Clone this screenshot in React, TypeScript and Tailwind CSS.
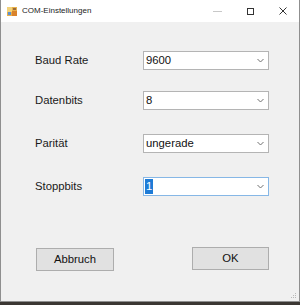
import React from "react";

const font = { fontFamily: '"Liberation Sans", Arial, sans-serif' };

function Chevron() {
  return (
    <svg width="7" height="5" viewBox="0 0 7 5" className="mr-[4px]">
      <polyline points="0.5,1 3.5,4 6.5,1" fill="none" stroke="#707070" strokeWidth="1" />
    </svg>
  );
}

function Combo({ value, focused }: { value: string; focused?: boolean }) {
  return (
    <div
      className={`ml-[108px] w-[126px] h-[19px] bg-white flex items-center justify-between border ${
        focused ? "border-[#86b7e6]" : "border-[#b4b4b4]"
      }`}
    >
      {focused ? (
        <span className="ml-[1px] h-[15px] px-[1px] bg-[#1e7bd6] text-white text-[11.3px] leading-[15px]">{value}</span>
      ) : (
        <span className="ml-[2px] text-[11.3px] leading-[15px] text-[#111]">{value}</span>
      )}
      <Chevron />
    </div>
  );
}

function Row({ label, value, focused, mt }: { label: string; value: string; focused?: boolean; mt: string }) {
  return (
    <div className={`flex items-center ${mt}`}>
      <span className="w-0 whitespace-nowrap ml-[34px] text-[11.3px] text-[#1a1a1a]">{label}</span>
      <Combo value={value} focused={focused} />
    </div>
  );
}

export default function App() {
  return (
    <div className="w-[300px] h-[305px] bg-[#3b3733] flex flex-col overflow-hidden" style={font}>
      <div className="h-[302px] flex flex-col border border-t-0 border-[#8f8f8f] bg-[#f0f0f0]">
        <div className="h-[22px] bg-white flex items-center relative">
          <svg width="11" height="11" viewBox="0 0 11 11" className="ml-[6px]">
            <rect x="0" y="1" width="10" height="9" fill="#e8b04a" />
            <rect x="0" y="1" width="5" height="5" fill="#f2d27a" />
            <rect x="5" y="5" width="5" height="5" fill="#d9822b" />
            <rect x="1" y="6" width="3" height="3" fill="#5b8fd1" />
            <rect x="6" y="2" width="3" height="2" fill="#9a6b3a" />
          </svg>
          <span className="ml-[4px] text-[8px] text-[#222]">COM-Einstellungen</span>
          <div className="ml-auto flex items-center">
            <div className="w-[9px] h-px bg-[#c8c8c8] mr-[25px]" />
            <div className="w-[7px] h-[7px] border border-[#333] mr-[25px]" />
            <svg width="8" height="8" viewBox="0 0 8 8" className="mr-[12px]">
              <line x1="0.5" y1="0.5" x2="7.5" y2="7.5" stroke="#333" strokeWidth="1" />
              <line x1="7.5" y1="0.5" x2="0.5" y2="7.5" stroke="#333" strokeWidth="1" />
            </svg>
          </div>
        </div>
        <div className="flex-1 flex flex-col relative">
          <Row label="Baud Rate" value="9600" mt="mt-[29px]" />
          <Row label="Datenbits" value="8" mt="mt-[21px]" />
          <Row label="Parität" value="ungerade" mt="mt-[24px]" />
          <Row label="Stoppbits" value="1" focused mt="mt-[24px]" />
          <div className="flex mt-[52px]">
            <button className="ml-[35px] w-[78px] h-[23px] bg-[#e1e1e1] border border-[#adadad] text-[11.3px] text-[#111]">
              Abbruch
            </button>
            <button className="ml-[78px] w-[77px] h-[23px] bg-[#e1e1e1] border border-[#adadad] text-[11.3px] text-[#111] -mt-px">
              OK
            </button>
          </div>
          <svg width="7" height="7" viewBox="0 0 7 7" className="absolute right-[2px] bottom-[2px]">
            <rect x="5" y="1" width="1" height="1" fill="#b8b8b8" />
            <rect x="3" y="3" width="1" height="1" fill="#b8b8b8" />
            <rect x="5" y="3" width="1" height="1" fill="#b8b8b8" />
            <rect x="1" y="5" width="1" height="1" fill="#b8b8b8" />
            <rect x="3" y="5" width="1" height="1" fill="#b8b8b8" />
            <rect x="5" y="5" width="1" height="1" fill="#b8b8b8" />
          </svg>
        </div>
      </div>
    </div>
  );
}
